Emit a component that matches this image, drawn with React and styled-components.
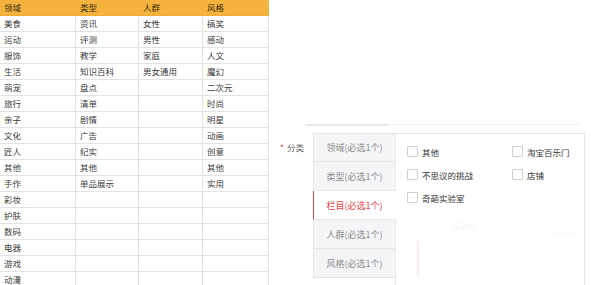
import React from 'react'
import styled, { createGlobalStyle } from 'styled-components'

const GlobalStyle = createGlobalStyle`
  html, body {
    margin: 0;
    padding: 0;
    background: #fff;
    overflow: hidden;
  }
  body {
    font-family: "Noto Sans CJK SC", "Noto Sans", sans-serif;
  }
`

const Page = styled.div`
  display: flex;
  width: 592px;
  height: 285px;
  overflow: hidden;
`

// left: the category sheet
const Sheet = styled.div`
  display: grid;
  grid-template-columns: 76px 63px 64px 66px;
  grid-auto-rows: 16px;
  width: 269px;
  flex: none;
  align-content: start;
`

const Cell = styled.div`
  box-sizing: border-box;
  padding-left: 4px;
  font-size: 8.5px;
  line-height: 15px;
  color: ${(p) => (p.head ? '#3a2c10' : '#3c3c3c')};
  background: ${(p) => (p.head ? '#f4b33e' : '#fff')};
  border-right: 1px solid ${(p) => (p.head ? '#f4b33e' : '#e2e2e2')};
  border-bottom: 1px solid ${(p) => (p.head ? '#f0ad36' : '#e2e2e2')};
  white-space: nowrap;
`

// right: the form fragment
const Form = styled.div`
  flex: 1;
  display: flex;
  flex-direction: column;
  padding-top: 124px;
`

const TopRule = styled.div`
  display: flex;
  margin-left: 36px;
  margin-right: 12px;
  height: 2px;
`

const RuleStrong = styled.div`
  width: 82px;
  background: #e6e6e6;
`

const RuleLight = styled.div`
  flex: 1;
  height: 1px;
  background: #eeeeee;
`

const Row = styled.div`
  display: flex;
  margin-top: 7px;
  margin-right: 7px;
  flex: 1;
`

const Label = styled.div`
  width: 44px;
  box-sizing: border-box;
  padding-left: 11px;
  padding-top: 8px;
  font-size: 8.5px;
  color: #666;
  white-space: nowrap;
`

const Star = styled.span`
  color: #e8413d;
  margin-right: 3px;
`

const Tabs = styled.div`
  width: 82px;
  display: flex;
  flex-direction: column;
`

const Tab = styled.div`
  height: 29px;
  box-sizing: border-box;
  display: flex;
  align-items: center;
  justify-content: center;
  font-size: 9px;
  color: ${(p) => (p.active ? '#e8413d' : '#8c8c8c')};
  background: ${(p) => (p.active ? '#fff' : '#f4f5f7')};
  border: 1px solid #e6e6e6;
  border-top: ${(p) => (p.first ? '1px solid #e6e6e6' : 'none')};
  border-left: 1px solid ${(p) => (p.active ? '#e8413d' : '#e6e6e6')};
  border-right: ${(p) => (p.active ? '1px solid #fff' : 'none')};
  margin-right: ${(p) => (p.active ? '-1px' : '0')};
  position: relative;
  z-index: ${(p) => (p.active ? 1 : 0)};
  white-space: nowrap;
`

const Panel = styled.div`
  flex: 1;
  border: 1px solid #e8e8e8;
  border-bottom: none;
  padding: 12px 0 0 11px;
  display: flex;
  flex-direction: column;
`

const Options = styled.div`
  display: grid;
  grid-template-columns: 105px 1fr;
  row-gap: 12px;
`

const Option = styled.label`
  display: flex;
  align-items: center;
  gap: 4px;
  font-size: 8.5px;
  color: #333;
  height: 11px;
  white-space: nowrap;
`

const Box = styled.span`
  width: 11px;
  height: 11px;
  box-sizing: border-box;
  border: 1px solid #cfcfcf;
  border-radius: 1px;
  background: #fff;
  flex: none;
`

const Faded = styled.div`
  margin-top: 18px;
  display: flex;
  flex-direction: column;
  opacity: 0.2;
`

const FadedTitle = styled.div`
  margin-left: 45px;
  font-size: 8px;
  color: #ccc;
  height: 12px;
`

const FadedLine = styled.div`
  align-self: flex-end;
  width: 36px;
  height: 1px;
  background: #ddd;
  margin-right: 2px;
`

const FadedCard = styled.div`
  margin: 6px 2px 0 10px;
  height: 34px;
  border: 1px solid #eee;
  border-left: 2px solid #f3a0a0;
`

const columns = [
  ['领域', '美食', '运动', '服饰', '生活', '萌宠', '旅行', '亲子', '文化', '匠人', '其他', '手作', '彩妆', '护肤', '数码', '电器', '游戏', '动漫'],
  ['类型', '资讯', '评测', '教学', '知识百科', '盘点', '清单', '剧情', '广告', '纪实', '其他', '单品展示'],
  ['人群', '女性', '男性', '家庭', '男女通用'],
  ['风格', '搞笑', '感动', '人文', '魔幻', '二次元', '时尚', '明星', '动画', '创意', '其他', '实用'],
]

const tabs = ['领域(必选1个)', '类型(必选1个)', '栏目(必选1个)', '人群(必选1个)', '风格(必选1个)']
const options = ['其他', '淘宝百乐门', '不思议的挑战', '店铺', '奇葩实验室']

export default function App() {
  const rows = columns[0].length

  return (
    <>
      <GlobalStyle />
      <Page>
        <Sheet>
          {Array.from({ length: rows }).map((_, r) =>
            columns.map((col, c) => (
              <Cell key={r + '-' + c} head={r === 0}>
                {col[r] || ''}
              </Cell>
            ))
          )}
        </Sheet>

        <Form>
          <TopRule>
            <RuleStrong />
            <RuleLight />
          </TopRule>
          <Row>
            <Label>
              <Star>*</Star>分类
            </Label>
            <Tabs>
              {tabs.map((t, i) => (
                <Tab key={t} first={i === 0} active={i === 2}>
                  {t}
                </Tab>
              ))}
            </Tabs>
            <Panel>
              <Options>
                {options.map((o) => (
                  <Option key={o}>
                    <Box />
                    {o}
                  </Option>
                ))}
              </Options>
              <Faded>
                <FadedTitle>请选择</FadedTitle>
                <FadedLine />
                <FadedCard />
              </Faded>
            </Panel>
          </Row>
        </Form>
      </Page>
    </>
  )
}
